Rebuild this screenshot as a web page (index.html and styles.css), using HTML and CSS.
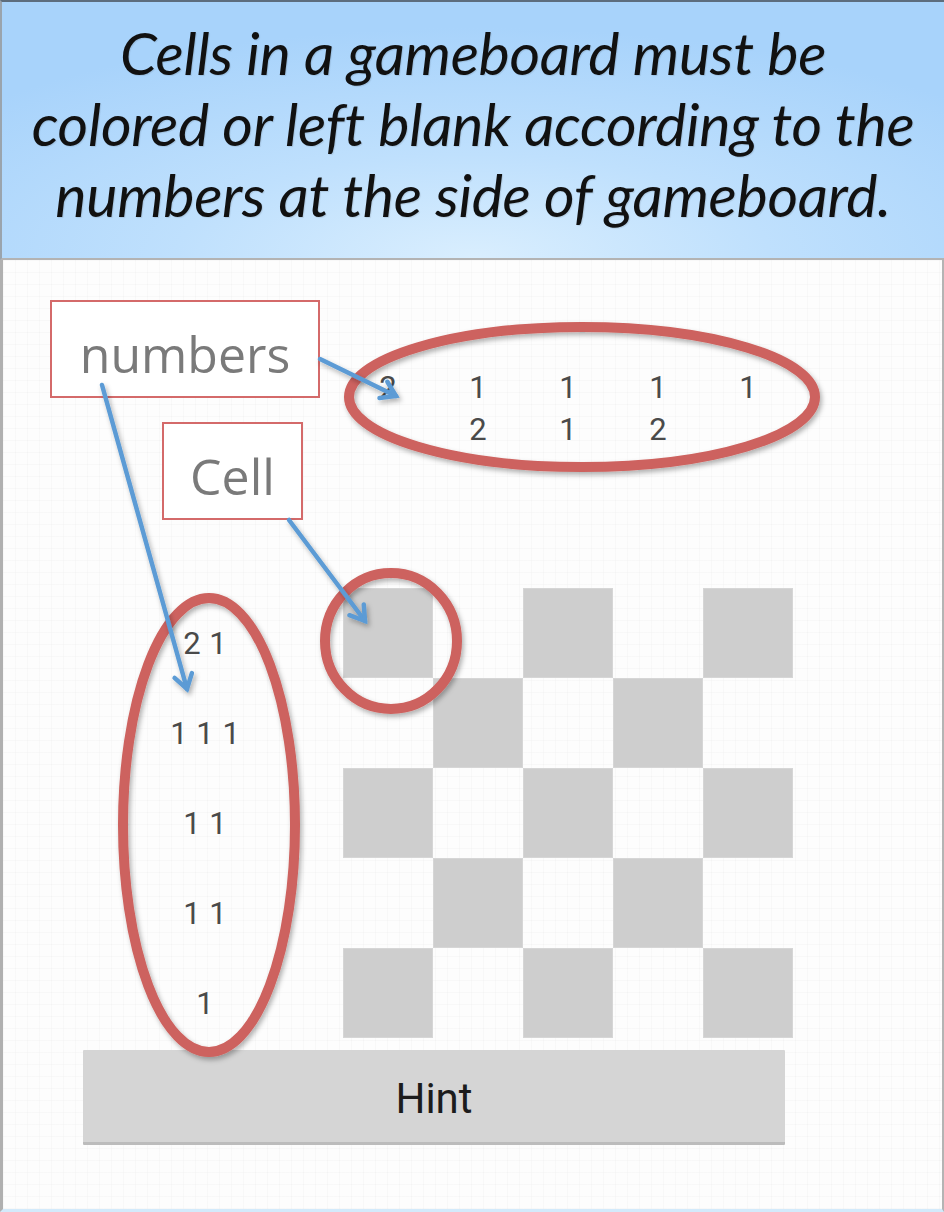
FILE: index.html
```html
<!DOCTYPE html>
<html lang="en">
<head>
<meta charset="utf-8">
<title>Gameboard rules</title>
<link rel="stylesheet" href="styles.css">
</head>
<body>
<div class="frame">
  <header class="banner">
    <p class="banner-text">Cells in a gameboard must be<br>colored or left blank according to the<br>numbers at the side of gameboard.</p>
  </header>
  <main class="board">
    <div class="game">
      <div class="corner"></div>
      <div class="col-clue">2</div>
      <div class="col-clue">1<br>2</div>
      <div class="col-clue">1<br>1</div>
      <div class="col-clue">1<br>2</div>
      <div class="col-clue">1</div>

      <div class="row-clue">2 1</div>
      <div class="cell on"></div><div class="cell"></div><div class="cell on"></div><div class="cell"></div><div class="cell on"></div>
      <div class="row-clue">1 1 1</div>
      <div class="cell"></div><div class="cell on"></div><div class="cell"></div><div class="cell on"></div><div class="cell"></div>
      <div class="row-clue">1 1</div>
      <div class="cell on"></div><div class="cell"></div><div class="cell on"></div><div class="cell"></div><div class="cell on"></div>
      <div class="row-clue">1 1</div>
      <div class="cell"></div><div class="cell on"></div><div class="cell"></div><div class="cell on"></div><div class="cell"></div>
      <div class="row-clue">1</div>
      <div class="cell on"></div><div class="cell"></div><div class="cell on"></div><div class="cell"></div><div class="cell on"></div>
    </div>
    <button class="hint" type="button">Hint</button>
  </main>

  <div class="label label-numbers">numbers</div>
  <div class="label label-cell">Cell</div>

  <svg class="notes" width="944" height="1212" viewBox="0 0 944 1212" xmlns="http://www.w3.org/2000/svg">
    <defs>
      <marker id="head" markerUnits="userSpaceOnUse" markerWidth="24" markerHeight="24" viewBox="0 0 24 24" refX="20" refY="12" orient="auto">
        <path d="M6 3 L20 12 L6 21" fill="none" stroke="#5b9bd5" stroke-width="4.5" stroke-linejoin="miter" stroke-linecap="round"/>
      </marker>
      <filter id="sh" x="-20%" y="-20%" width="140%" height="140%">
        <feDropShadow dx="2" dy="3" stdDeviation="2.5" flood-color="#000" flood-opacity="0.3"/>
      </filter>
    </defs>
    <g class="rings" filter="url(#sh)">
      <ellipse cx="582" cy="397" rx="233" ry="70"/>
      <ellipse cx="209" cy="825" rx="86" ry="227"/>
      <ellipse cx="391" cy="641" rx="66" ry="68"/>
    </g>
    <g class="arrows" filter="url(#sh)">
      <line x1="320" y1="359" x2="396" y2="396" marker-end="url(#head)"/>
      <line x1="102" y1="385" x2="187" y2="689" marker-end="url(#head)"/>
      <line x1="289" y1="520" x2="365" y2="621" marker-end="url(#head)"/>
    </g>
  </svg>
</div>
</body>
</html>
```
FILE: styles.css
```css
* { box-sizing: border-box; }
html, body { margin: 0; padding: 0; background: #ffffff; }

.frame {
  position: relative;
  width: 944px;
  height: 1212px;
  overflow: hidden;
  display: flex;
  flex-direction: column;
  background: #fdfdfd;
}

.banner {
  height: 260px;
  flex: none;
  border-top: 2px solid #5d6d7d;
  border-left: 2px solid #9aa4ad;
  border-bottom: 2px solid #b3b3b3;
  background: radial-gradient(ellipse 70% 90% at 50% 100%, #d9eefe 0%, #bfe0fd 45%, #a8d3fb 100%);
  display: flex;
  align-items: center;
  justify-content: center;
}

.banner-text {
  margin: 0;
  padding-bottom: 14px;
  font-family: "Lato", "Open Sans", sans-serif;
  font-style: italic;
  font-size: 59px;
  line-height: 71px;
  letter-spacing: -0.3px;
  text-align: center;
  white-space: nowrap;
  color: #111111;
  text-shadow: 1px 1px 1px rgba(0, 0, 0, 0.1);
}

.board {
  flex: 1;
  border-left: 3px solid #b0b0b0;
  border-right: 2px solid #b4b4b4;
  border-bottom: 3px solid #d3eafb;
  background-color: #fdfdfd;
  background-image:
    repeating-linear-gradient(0deg, rgba(0,0,0,0.018) 0 1px, transparent 1px 12px),
    repeating-linear-gradient(90deg, rgba(0,0,0,0.018) 0 1px, transparent 1px 12px);
  padding: 107px 0 0 80px;
  display: flex;
  flex-direction: column;
  align-items: flex-start;
}

.game {
  display: grid;
  grid-template-columns: 260px repeat(5, 90px);
  grid-template-rows: 221px repeat(5, 90px);
  font-family: "Roboto", "Liberation Sans", sans-serif;
  color: #4a4a4a;
}

.col-clue {
  font-size: 31px;
  line-height: 42px;
  text-align: center;
}

.row-clue {
  font-size: 31px;
  display: flex;
  align-items: center;
  justify-content: center;
  padding: 20px 16px 0 0;
  word-spacing: 1px;
}

.cell { background: transparent; }
.cell.on {
  background: #cecece;
  box-shadow: inset 0 0 0 1px #d6d6d6;
}

.hint {
  margin-top: 12px;
  width: 702px;
  height: 95px;
  border: none;
  border-bottom: 3px solid #bcbcbc;
  border-radius: 1px;
  background: #d5d5d5;
  font-family: "Roboto", "Liberation Sans", sans-serif;
  font-size: 42px;
  color: #1c1c1c;
  padding: 4px 0 0 0;
}

.label {
  position: absolute;
  background: #ffffff;
  border: 2px solid #d46a6a;
  font-family: "Open Sans", "Noto Sans", sans-serif;
  font-size: 50px;
  color: #7a7a7a;
  display: flex;
  align-items: center;
  justify-content: center;
}
.label-numbers { left: 50px; top: 300px; width: 270px; height: 98px; padding-top: 10px; }
.label-cell { left: 162px; top: 422px; width: 141px; height: 98px; padding-top: 10px; }

.notes {
  position: absolute;
  left: 0;
  top: 0;
  pointer-events: none;
}
.rings ellipse {
  fill: none;
  stroke: #cd625e;
  stroke-width: 10;
}
.arrows line {
  stroke: #5b9bd5;
  stroke-width: 4.5;
  stroke-linecap: round;
}
```
